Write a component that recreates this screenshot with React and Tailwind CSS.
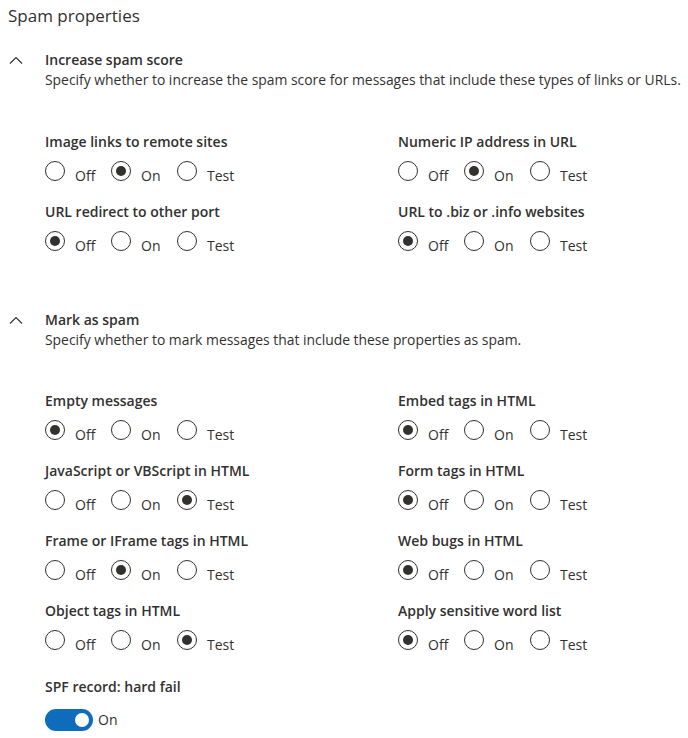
import React from 'react';

const increaseScore = [
  { label: 'Image links to remote sites', value: 'On' },
  { label: 'Numeric IP address in URL', value: 'On' },
  { label: 'URL redirect to other port', value: 'Off' },
  { label: 'URL to .biz or .info websites', value: 'Off' },
];

const markAsSpam = [
  { label: 'Empty messages', value: 'Off' },
  { label: 'Embed tags in HTML', value: 'Off' },
  { label: 'JavaScript or VBScript in HTML', value: 'Test' },
  { label: 'Form tags in HTML', value: 'Off' },
  { label: 'Frame or IFrame tags in HTML', value: 'On' },
  { label: 'Web bugs in HTML', value: 'Off' },
  { label: 'Object tags in HTML', value: 'Test' },
  { label: 'Apply sensitive word list', value: 'Off' },
];

function Chevron() {
  return (
    <svg width="14" height="8" viewBox="0 0 14 8" className="shrink-0 mt-[6px]">
      <path d="M1 7.5 L7 1.5 L13 7.5" fill="none" stroke="#323130" strokeWidth="1.1" />
    </svg>
  );
}

function RadioOption({ text, checked }) {
  return (
    <div className="w-[66px] flex items-start">
      <span className="w-5 h-5 rounded-full border border-[#323130] flex items-center justify-center shrink-0">
        {checked && <span className="w-[10px] h-[10px] rounded-full bg-[#323130]" />}
      </span>
      <span className="ml-[10px] mt-[5px] leading-5 text-[14px] text-[#323130]">{text}</span>
    </div>
  );
}

function Setting({ label, value }) {
  return (
    <div>
      <div className="leading-[18px] text-[14px] font-semibold text-[#323130]">{label}</div>
      <div className="mt-[10px] flex h-5">
        {['Off', 'On', 'Test'].map(opt => (
          <RadioOption key={opt} text={opt} checked={opt === value} />
        ))}
      </div>
    </div>
  );
}

function Section({ title, description, items, className = '', gridClass }) {
  return (
    <div className={className}>
      <div className="flex">
        <div className="w-[45px] pl-[9px]">
          <Chevron />
        </div>
        <div>
          <div className="leading-5 text-[14px] font-semibold text-[#323130]">{title}</div>
          <div className="leading-5 text-[13.9px] text-[#323130]">{description}</div>
        </div>
      </div>
      <div className={`pl-[45px] grid grid-cols-[353px_1fr] gap-y-[22px] ${gridClass}`}>
        {items.map(it => (
          <Setting key={it.label} label={it.label} value={it.value} />
        ))}
      </div>
    </div>
  );
}

export default function App() {
  return (
    <div className="w-[688px] h-[738px] bg-white overflow-hidden font-['Segoe_UI','Open_Sans',sans-serif]">
      <div className="pt-1 pl-2 leading-6 text-[17px] text-[#323130]">Spam properties</div>

      <Section
        className="mt-[22px]"
        gridClass="mt-[43px]"
        title="Increase spam score"
        description="Specify whether to increase the spam score for messages that include these types of links or URLs."
        items={increaseScore}
      />

      <Section
        className="mt-[59px]"
        gridClass="mt-[42px]"
        title="Mark as spam"
        description="Specify whether to mark messages that include these properties as spam."
        items={markAsSpam}
      />

      <div className="pl-[45px] mt-[28px]">
        <div className="leading-[18px] text-[14px] font-semibold text-[#323130]">SPF record: hard fail</div>
        <div className="mt-[13px] flex items-center">
          <span className="w-[48px] h-[22px] rounded-full bg-[#0f6cbd] flex items-center justify-end pr-[4px]">
            <span className="w-[14px] h-[14px] rounded-full bg-white" />
          </span>
          <span className="ml-[5px] text-[14px] leading-5 text-[#323130]">On</span>
        </div>
      </div>
    </div>
  );
}
